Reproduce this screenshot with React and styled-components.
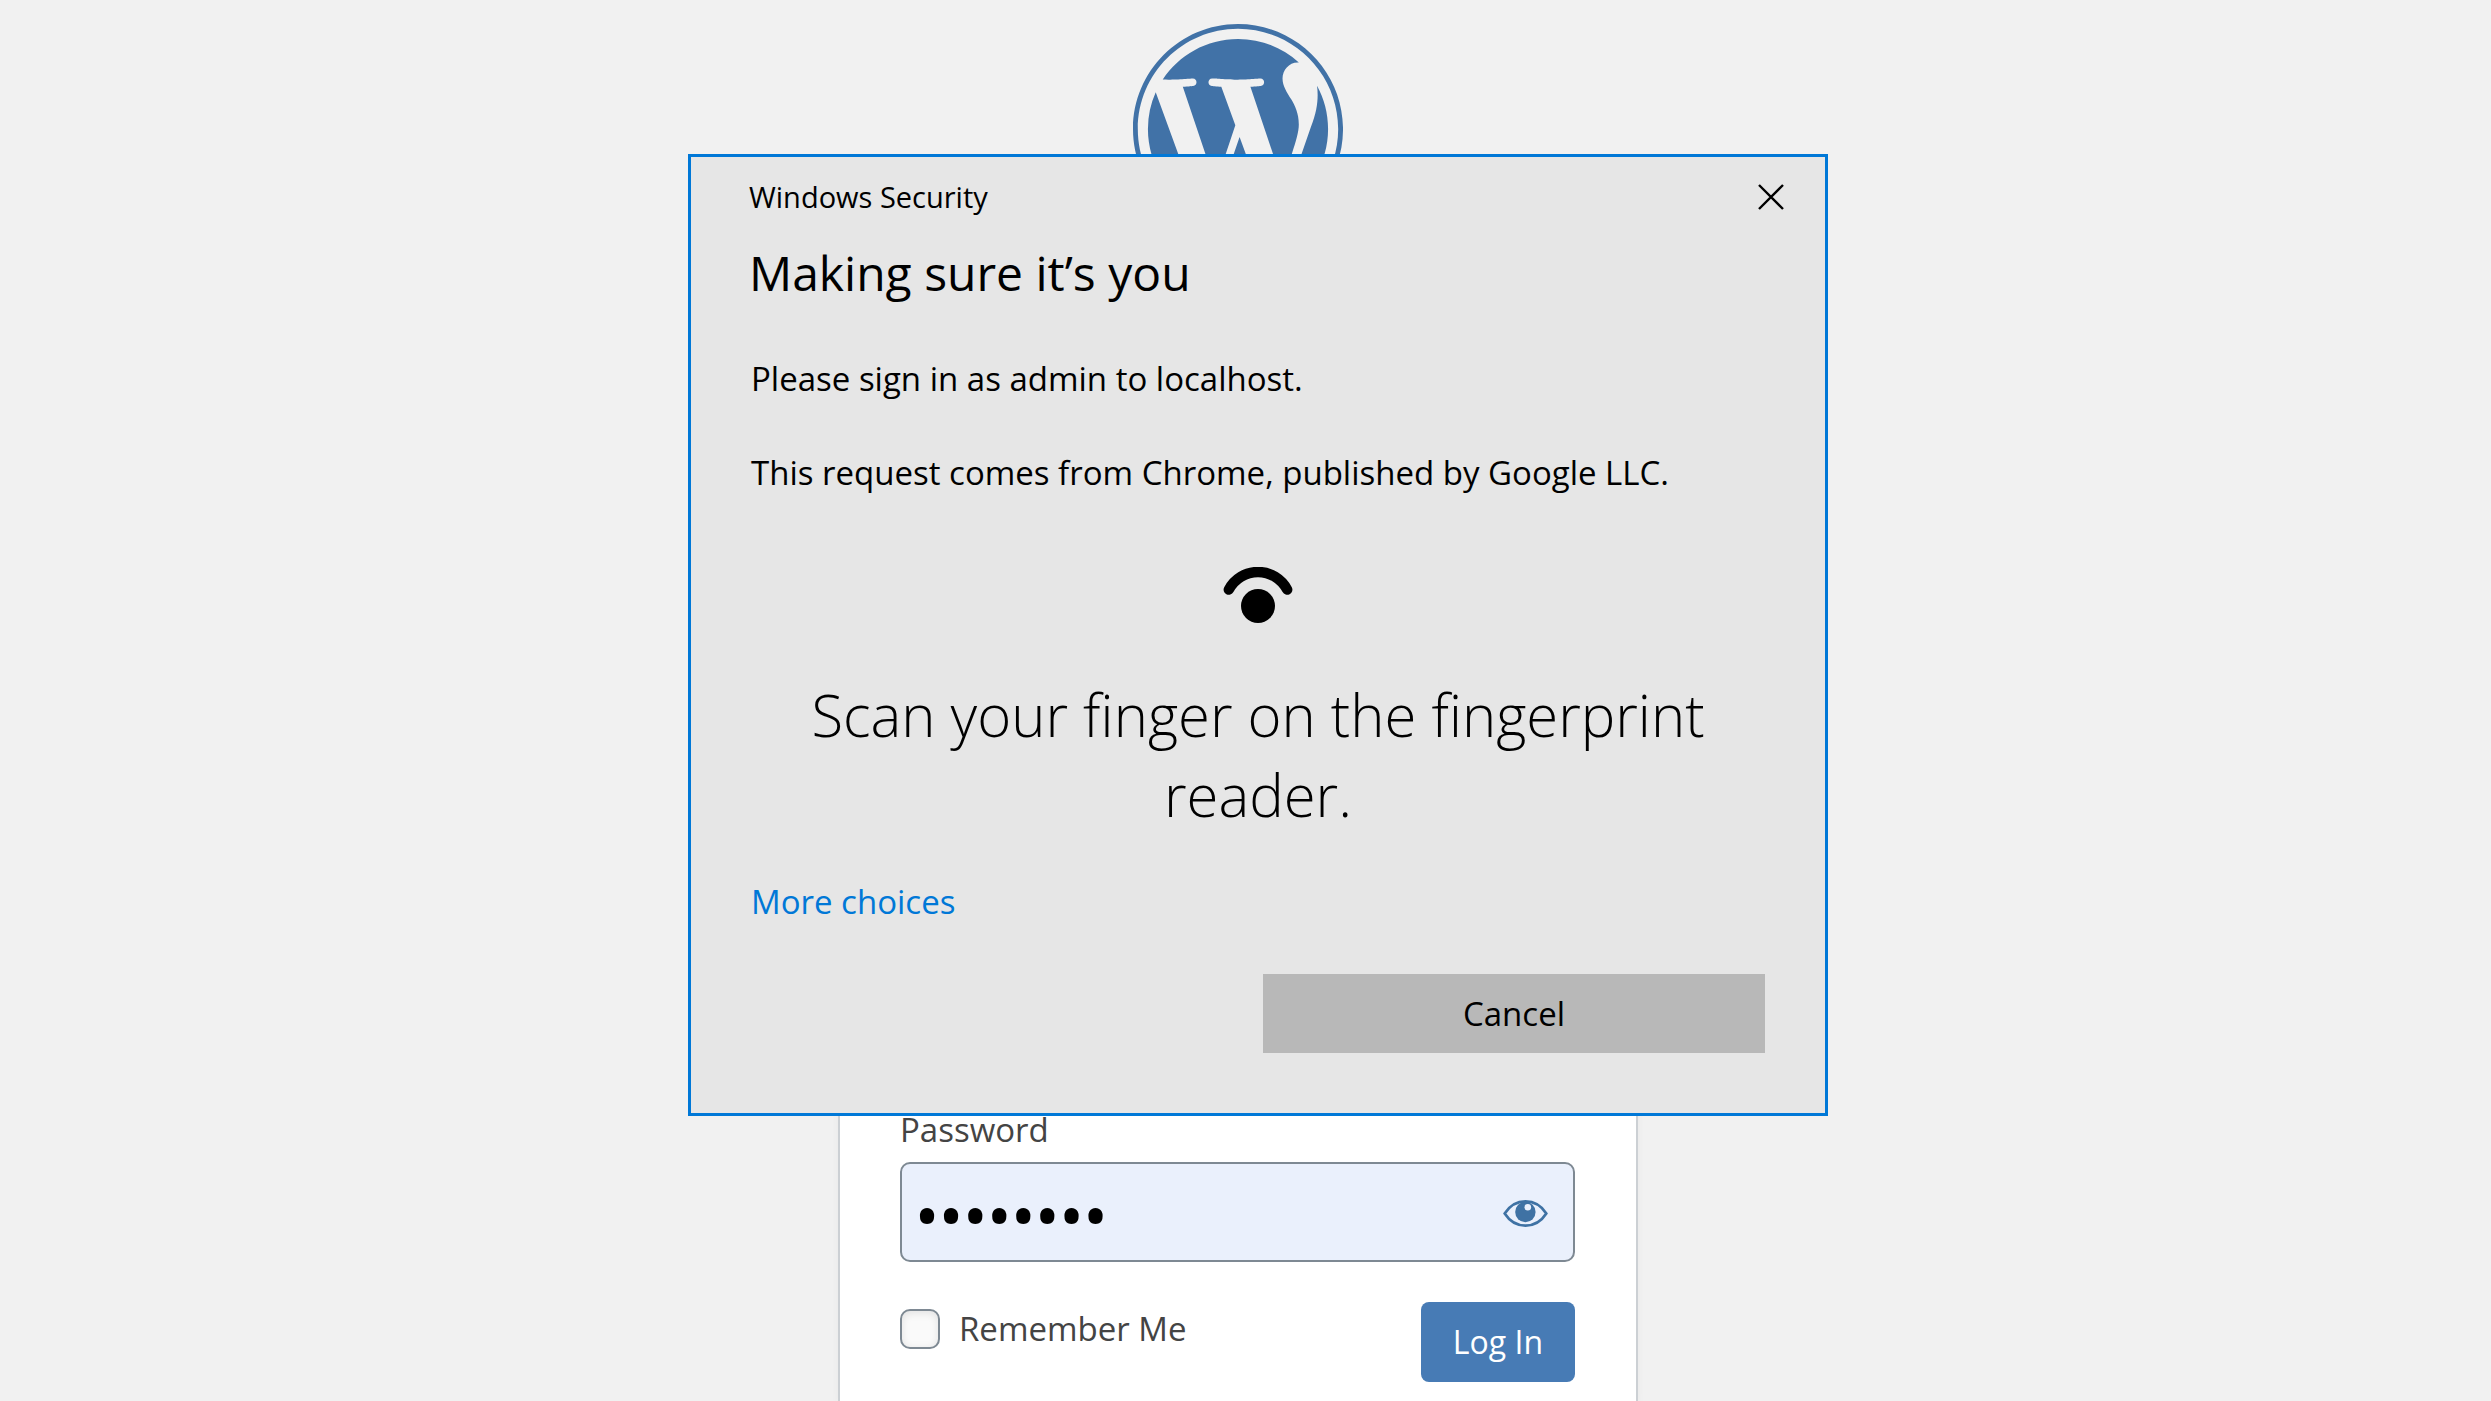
import React, { useState } from 'react';
import styled, { createGlobalStyle } from 'styled-components';

const App = () => {
  const [password, setPassword] = useState('password');
  const [visible, setVisible] = useState(false);

  return (
    <Page>
      <GlobalStyle />
      <Logo viewBox="0 0 122.52 122.523" role="img" aria-label="WordPress">
        <path d="M8.708 61.26c0 20.802 12.089 38.779 29.619 47.298L13.258 39.872a52.354 52.354 0 0 0-4.55 21.388zM96.74 58.608c0-6.495-2.333-10.993-4.334-14.494-2.664-4.329-5.161-7.995-5.161-12.324 0-4.831 3.664-9.328 8.825-9.328.233 0 .454.029.681.042-9.35-8.566-21.807-13.796-35.489-13.796-18.36 0-34.513 9.42-43.91 23.688 1.233.037 2.395.063 3.382.063 5.497 0 14.006-.667 14.006-.667 2.833-.167 3.167 3.994.337 4.329 0 0-2.847.335-6.015.501L48.2 93.547l11.501-34.493-8.188-22.434c-2.83-.166-5.511-.501-5.511-.501-2.832-.166-2.5-4.496.332-4.329 0 0 8.679.667 13.843.667 5.496 0 14.006-.667 14.006-.667 2.835-.167 3.168 3.994.337 4.329 0 0-2.853.335-6.015.501l18.992 56.494 5.242-17.517c2.272-7.269 4.001-12.49 4.001-16.989z" />
        <path d="M62.184 65.857l-15.768 45.819a52.552 52.552 0 0 0 14.846 2.141c6.12 0 11.989-1.058 17.452-2.979a4.451 4.451 0 0 1-.374-.724L62.184 65.857zM107.376 36.046c.226 1.674.354 3.471.354 5.404 0 5.333-.996 11.328-3.996 18.824l-16.053 46.413c15.624-9.111 26.133-26.038 26.133-45.426.001-9.137-2.333-17.729-6.438-25.215z" />
        <path d="M61.262 0C27.483 0 0 27.481 0 61.26c0 33.783 27.483 61.263 61.262 61.263 33.778 0 61.265-27.48 61.265-61.263C122.526 27.481 95.04 0 61.262 0zm0 119.715c-32.23 0-58.453-26.223-58.453-58.455 0-32.23 26.222-58.451 58.453-58.451 32.229 0 58.45 26.221 58.45 58.451 0 32.232-26.221 58.455-58.45 58.455z" />
      </Logo>

      <LoginForm onSubmit={(e) => e.preventDefault()}>
        <FieldLabel htmlFor="password">Password</FieldLabel>
        <PasswordBox>
          <PasswordInput
            id="password"
            type={visible ? 'text' : 'password'}
            value={password}
            onChange={(e) => setPassword(e.target.value)}
          />
          <EyeButton type="button" aria-label="Show password" onClick={() => setVisible(!visible)}>
            <svg width="45" height="27" viewBox="0 0 45 27">
              <path
                d="M1.7 13.5C6.5 6 13.5 1.4 22.5 1.4S38.5 6 43.3 13.5C38.5 21 31.5 25.6 22.5 25.6S6.5 21 1.7 13.5Z"
                fill="none"
                stroke="#3f72a4"
                strokeWidth="2.7"
              />
              <circle cx="22.4" cy="12" r="10.2" fill="#3f72a4" />
              <circle cx="24.8" cy="7.2" r="3.3" fill="#eaf0fc" />
            </svg>
          </EyeButton>
        </PasswordBox>
        <FormFooter>
          <Remember htmlFor="remember">
            <Checkbox id="remember" type="checkbox" />
            Remember Me
          </Remember>
          <LoginButton type="submit">Log In</LoginButton>
        </FormFooter>
      </LoginForm>

      <Dialog role="dialog" aria-labelledby="dialog-title">
        <TitleBar>
          <span>Windows Security</span>
          <CloseButton type="button" aria-label="Close">
            <svg width="26" height="26" viewBox="0 0 26 26">
              <path d="M1 1L25 25M25 1L1 25" stroke="#000" strokeWidth="2.4" />
            </svg>
          </CloseButton>
        </TitleBar>
        <Heading id="dialog-title">Making sure it’s you</Heading>
        <DialogBody>
          <Text>Please sign in as admin to localhost.</Text>
          <Text>This request comes from Chrome, published by Google LLC.</Text>
          <FingerIcon width="70" height="56" viewBox="0 0 70 56" aria-hidden="true">
            <path
              d="M5.8 22.6A33 33 0 0 1 64.2 22.6"
              fill="none"
              stroke="#000"
              strokeWidth="10.4"
              strokeLinecap="round"
            />
            <circle cx="35" cy="39" r="17" />
          </FingerIcon>
          <Prompt>Scan your finger on the fingerprint reader.</Prompt>
          <MoreLink href="#choices">More choices</MoreLink>
          <CancelButton type="button">Cancel</CancelButton>
        </DialogBody>
      </Dialog>
    </Page>
  );
};

const GlobalStyle = createGlobalStyle`
  *, *::before, *::after {
    box-sizing: border-box;
  }

  body {
    margin: 0;
    background: #f1f1f1;
    font-family: 'Segoe UI', 'Open Sans', 'Noto Sans', sans-serif;
  }

  button, input {
    font-family: inherit;
  }
`;

const Page = styled.main`
  position: relative;
  display: flex;
  flex-direction: column;
  align-items: center;
  min-height: 100vh;
  padding: 24px 15px 0 0;
`;

const Logo = styled.svg`
  width: 210px;
  height: 210px;
  fill: #4172a7;
`;

const LoginForm = styled.form`
  display: flex;
  flex-direction: column;
  flex: 1;
  justify-content: flex-end;
  width: 100%;
  max-width: 800px;
  margin-top: 62px;
  padding: 60px 61px 19px 60px;
  background: #fff;
  border: 2px solid #ccd0d4;
  border-bottom: 0;
  box-shadow: 0 2px 8px rgba(0, 0, 0, 0.04);
`;

const FieldLabel = styled.label`
  margin-bottom: 8px;
  color: #444;
  font-size: 33px;
  line-height: 48px;
`;

const PasswordBox = styled.div`
  position: relative;
`;

const PasswordInput = styled.input`
  display: block;
  width: 100%;
  height: 100px;
  padding: 5px 100px 0 13px;
  color: #000;
  font-family: 'Noto Sans', sans-serif;
  font-size: 64px;
  background: #eaf0fc;
  border: 2px solid #7e8993;
  border-radius: 10px;
  outline: none;
`;

const EyeButton = styled.button`
  position: absolute;
  top: 0;
  right: 0;
  display: flex;
  align-items: center;
  justify-content: center;
  width: 100px;
  height: 100px;
  padding: 2px 0 0;
  background: none;
  border: 0;
  cursor: pointer;
`;

const FormFooter = styled.div`
  display: flex;
  align-items: flex-start;
  justify-content: space-between;
  margin-top: 40px;
`;

const Remember = styled.label`
  display: flex;
  align-items: center;
  gap: 19px;
  margin-top: 7px;
  color: #444;
  font-size: 33px;
  line-height: 40px;
`;

const Checkbox = styled.input`
  appearance: none;
  width: 40px;
  height: 40px;
  margin: 0;
  background: #fafafa;
  border: 2px solid #7e8993;
  border-radius: 10px;
  box-shadow: inset 0 2px 8px rgba(0, 0, 0, 0.1);

  &:checked {
    background: #4172a7;
  }
`;

const LoginButton = styled.button`
  height: 80px;
  padding: 0 32px;
  color: #fff;
  font-size: 32px;
  line-height: 48px;
  background: #477bb5;
  border: 0;
  border-radius: 8px;
  cursor: pointer;
`;

/* floats over the page, a little right of centre */
const Dialog = styled.section`
  position: absolute;
  top: 154px;
  right: 0;
  left: 25px;
  max-width: 1140px;
  margin: 0 auto;
  padding: 20px 38px 60px 58px;
  color: #000;
  background: #e6e6e6;
  border: 3px solid #0078d7;
`;

const TitleBar = styled.header`
  display: flex;
  align-items: center;
  justify-content: space-between;
  font-size: 29px;
  line-height: 40px;
`;

const CloseButton = styled.button`
  display: flex;
  align-items: center;
  justify-content: center;
  width: 32px;
  height: 40px;
  padding: 0;
  background: none;
  border: 0;
`;

const Heading = styled.h1`
  margin: 24px 0 50px;
  font-size: 48px;
  font-weight: 400;
  line-height: 64px;
`;

const DialogBody = styled.div`
  display: flex;
  flex-direction: column;
  align-items: flex-start;
  padding: 0 22px 0 2px;
`;

const Text = styled.p`
  margin: 0 0 46px;
  font-size: 33px;
  line-height: 48px;
`;

const FingerIcon = styled.svg`
  align-self: center;
  margin-top: 24px;
`;

const Prompt = styled.p`
  align-self: center;
  max-width: 960px;
  margin: 52px 0 43px;
  font-size: 58px;
  font-weight: 300;
  line-height: 80px;
  text-align: center;
`;

const MoreLink = styled.a`
  color: #0078d7;
  font-size: 33px;
  line-height: 48px;
  text-decoration: none;
`;

const CancelButton = styled.button`
  align-self: flex-end;
  width: 50%;
  max-width: 502px;
  height: 79px;
  margin-top: 48px;
  color: #000;
  font-size: 33px;
  background: #b8b8b8;
  border: 0;
  cursor: pointer;
`;

export default App;
